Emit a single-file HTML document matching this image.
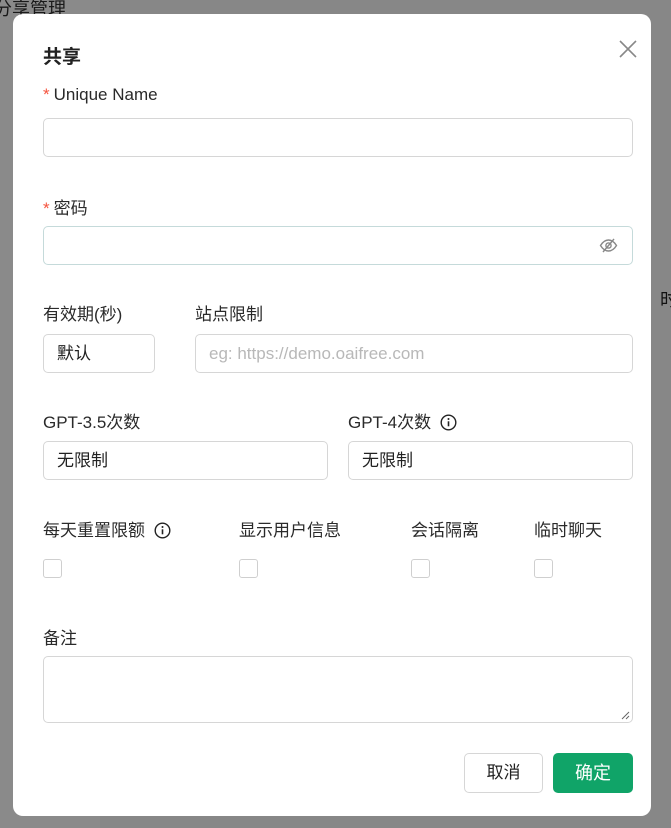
<!DOCTYPE html>
<html><head><meta charset="utf-8"><style>
*{box-sizing:border-box;margin:0;padding:0}
body{width:671px;height:828px;background:#878787;font-family:"Liberation Sans","Noto Sans CJK SC",sans-serif;font-size:16px;color:#222;position:relative;overflow:hidden}
.bg{position:absolute;left:0;top:0;width:100px;height:828px;background:#8a8a8a}
.bgt{position:absolute;left:-6px;top:-5px;font-size:18px;color:#1a1a1a}
.m{position:absolute;left:13px;top:14px;width:638px;height:802px;background:#fff;border-radius:10px}
.a{position:absolute}
.lab{position:absolute;font-size:17px;color:#2a2a2a}
.req{color:#f5533d;margin-right:4px}
.in{position:absolute;border:1px solid #d6d6d6;border-radius:5px;height:39px;padding-left:13px;line-height:37px;font-size:17px;color:#222}
.cb{position:absolute;width:19px;height:19px;border:1px solid #cfcfcf;border-radius:3px;top:559px}
</style></head><body>
<div class="bg"></div>
<div class="bgt">分享管理</div>
<div class="a" style="left:660px;top:286px;font-size:18px;color:#111">时</div>
<div class="m"></div>
<div class="a" style="left:43px;top:42px;font-size:19px;font-weight:bold;color:#222">共享</div>
<svg class="a" style="left:619px;top:40px" width="18" height="18" viewBox="0 0 18 18"><path d="M1 1L17 17M17 1L1 17" stroke="#888" stroke-width="1.6"/></svg>
<div class="lab" style="left:43px;top:85px"><span class="req">*</span>Unique Name</div>
<div class="in" style="left:43px;top:118px;width:590px"></div>
<div class="lab" style="left:43px;top:194px"><span class="req">*</span>密码</div>
<div class="in" style="left:43px;top:226px;width:590px;border-color:#c5dada"></div>
<svg class="a" style="left:599px;top:237px" width="19" height="17" viewBox="0 0 19 17"><path d="M1.5 8.5C4 4.5 7 3 9.5 3S15 4.5 17.5 8.5C15 12.5 12 14 9.5 14S4 12.5 1.5 8.5Z" fill="none" stroke="#888" stroke-width="1.4"/><circle cx="9.5" cy="8.5" r="2.6" fill="none" stroke="#888" stroke-width="1.4"/><path d="M15 2L4 15" stroke="#888" stroke-width="1.4"/></svg>
<div class="lab" style="left:43px;top:300px">有效期(秒)</div>
<div class="lab" style="left:195px;top:300px">站点限制</div>
<div class="in" style="left:43px;top:334px;width:112px">默认</div>
<div class="in" style="left:195px;top:334px;width:438px;color:#b8b8b8">eg: https://demo.oaifree.com</div>
<div class="lab" style="left:43px;top:408px">GPT-3.5次数</div>
<div class="lab" style="left:348px;top:408px">GPT-4次数 <svg style="vertical-align:-3px;margin-left:4px" width="17" height="17" viewBox="0 0 17 17"><circle cx="8.5" cy="8.5" r="7.3" fill="none" stroke="#222" stroke-width="1.4"/><path d="M8.5 7.3v5" stroke="#222" stroke-width="1.6"/><circle cx="8.5" cy="5" r="1" fill="#222"/></svg></div>
<div class="in" style="left:43px;top:441px;width:285px">无限制</div>
<div class="in" style="left:348px;top:441px;width:285px">无限制</div>
<div class="lab" style="left:43px;top:516px">每天重置限额 <svg style="vertical-align:-3px;margin-left:4px" width="17" height="17" viewBox="0 0 17 17"><circle cx="8.5" cy="8.5" r="7.3" fill="none" stroke="#222" stroke-width="1.4"/><path d="M8.5 7.3v5" stroke="#222" stroke-width="1.6"/><circle cx="8.5" cy="5" r="1" fill="#222"/></svg></div>
<div class="lab" style="left:239px;top:516px">显示用户信息</div>
<div class="lab" style="left:411px;top:516px">会话隔离</div>
<div class="lab" style="left:534px;top:516px">临时聊天</div>
<div class="cb" style="left:43px"></div>
<div class="cb" style="left:239px"></div>
<div class="cb" style="left:411px"></div>
<div class="cb" style="left:534px"></div>
<div class="lab" style="left:43px;top:624px">备注</div>
<div class="in" style="left:43px;top:656px;width:590px;height:67px"></div>
<svg class="a" style="left:621px;top:711px" width="9" height="9"><path d="M8 1L1 8M8 5L5 8" stroke="#666" stroke-width="1"/></svg>
<div class="in" style="left:464px;top:753px;width:79px;height:40px;padding:0;text-align:center;line-height:38px">取消</div>
<div class="a" style="left:553px;top:753px;width:80px;height:40px;background:#10a468;border-radius:5px;color:#fff;text-align:center;line-height:40px;font-size:18px">确定</div>
</body></html>
